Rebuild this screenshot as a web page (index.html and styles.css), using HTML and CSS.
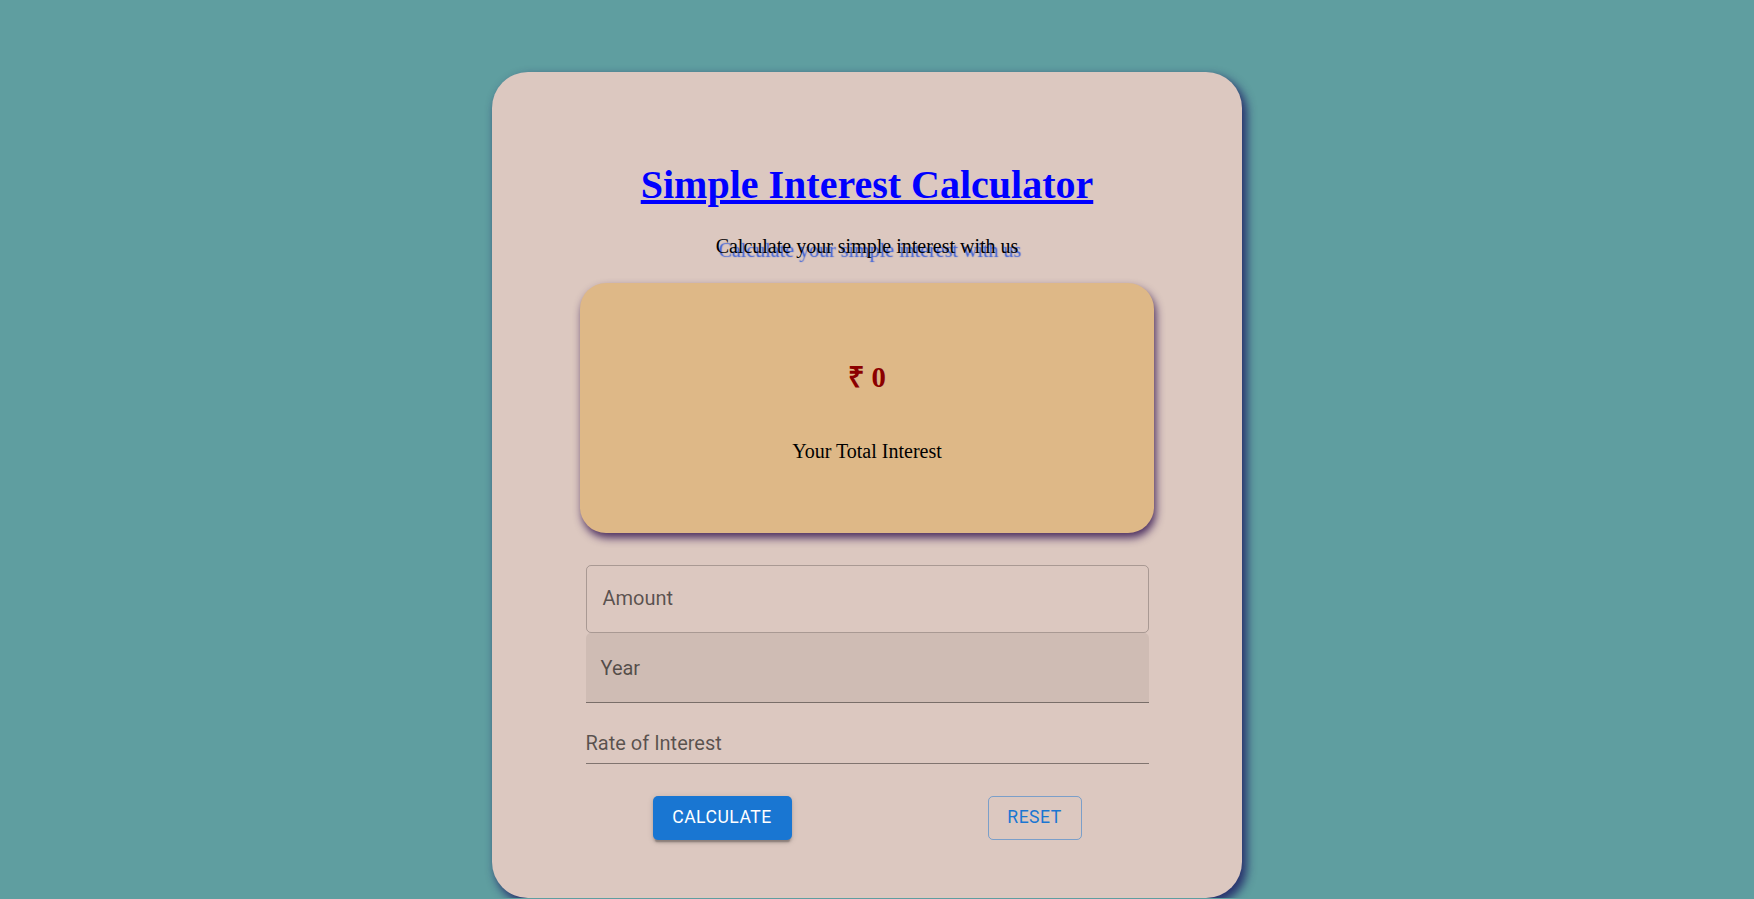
FILE: index.html
```html
<!DOCTYPE html>
<html lang="en">
<head>
<meta charset="utf-8">
<title>Simple Interest Calculator</title>
<link rel="stylesheet" href="styles.css">
</head>
<body>
<div class="page">
  <main class="card">
    <h1 class="title"><a href="#">Simple Interest Calculator</a></h1>
    <p class="subtitle">Calculate your simple interest with us</p>
    <section class="result">
      <h2 class="amount">₹ 0</h2>
      <p class="result-label">Your Total Interest</p>
    </section>
    <form class="fields">
      <div class="field outlined"><label class="label">Amount</label></div>
      <div class="field filled"><label class="label">Year</label></div>
      <div class="field standard"><label class="label">Rate of Interest</label></div>
    </form>
    <div class="actions">
      <button class="btn contained" type="button">Calculate</button>
      <button class="btn outline-btn" type="button">Reset</button>
    </div>
  </main>
</div>
</body>
</html>
```

FILE: styles.css
```css
html, body {
  margin: 0;
  background: #5f9ea0;
}

body {
  font-family: "Liberation Serif", "Times New Roman", serif;
}

.page {
  display: flex;
  justify-content: center;
  padding: 72px 20px 0 0;
}

.card {
  width: 750px;
  height: 826px;
  box-sizing: border-box;
  background: #dcc8c0;
  border-radius: 36px;
  box-shadow: 4px 5px 10px 1px rgba(30, 30, 100, 0.85);
  padding-top: 91px;
  display: flex;
  flex-direction: column;
  align-items: center;
}

.title {
  margin: 0;
  font-size: 40px;
  line-height: 44px;
  font-weight: bold;
}

.title a {
  color: #0000ff;
  text-decoration: underline;
}

.subtitle {
  margin: 28px 0 0;
  font-size: 20px;
  line-height: 22px;
  color: #000;
  text-shadow: 3px 4px 1px #3a5fd8;
}

.result {
  margin-top: 26px;
  width: 574px;
  height: 250px;
  box-sizing: border-box;
  background: #deb887;
  border-radius: 26px;
  box-shadow: 2px 5px 8px rgba(50, 20, 80, 0.85);
  padding-top: 77px;
  display: flex;
  flex-direction: column;
  align-items: center;
}

.amount {
  margin: 0;
  font-size: 28.8px;
  line-height: 34px;
  font-weight: bold;
  color: #8b0000;
}

.result-label {
  margin: 46px 0 0;
  font-size: 20px;
  line-height: 22px;
  color: #000;
}

.fields {
  margin: 32px 0 0;
  width: 563px;
  display: flex;
  flex-direction: column;
}

.field {
  box-sizing: border-box;
  font-family: Roboto, "Liberation Sans", sans-serif;
  font-size: 20px;
  line-height: 23px;
  color: rgba(0, 0, 0, 0.6);
}

.label {
  display: block;
}

.outlined {
  height: 68px;
  border: 1px solid rgba(0, 0, 0, 0.23);
  border-radius: 5px;
  padding: 21px 16px 0;
}

.filled {
  height: 70px;
  background: rgba(0, 0, 0, 0.06);
  border-bottom: 1px solid rgba(0, 0, 0, 0.42);
  border-radius: 5px 5px 0 0;
  padding: 24px 15px 0;
}

.standard {
  height: 61px;
  border-bottom: 1px solid rgba(0, 0, 0, 0.42);
  padding: 29px 0 0;
}

.actions {
  margin-top: 32px;
  width: 563px;
  box-sizing: border-box;
  padding: 0 67px;
  display: flex;
  justify-content: space-between;
  align-items: flex-start;
}

.btn {
  font-family: Roboto, "Liberation Sans", sans-serif;
  font-weight: 400;
  font-size: 17.6px;
  letter-spacing: 0.48px;
  text-transform: uppercase;
  height: 44px;
  border-radius: 5px;
  box-sizing: border-box;
  line-height: 1;
  padding: 0;
  cursor: pointer;
}

.contained {
  width: 139px;
  background: #1976d2;
  color: #fff;
  border: none;
  box-shadow: 0 3.6px 1.2px -2.4px rgba(0, 0, 0, 0.2),
              0 2.4px 2.4px 0 rgba(0, 0, 0, 0.14),
              0 1.2px 6px 0 rgba(0, 0, 0, 0.12);
}

.outline-btn {
  width: 94px;
  background: transparent;
  color: #1976d2;
  border: 1px solid rgba(25, 118, 210, 0.5);
}
```
